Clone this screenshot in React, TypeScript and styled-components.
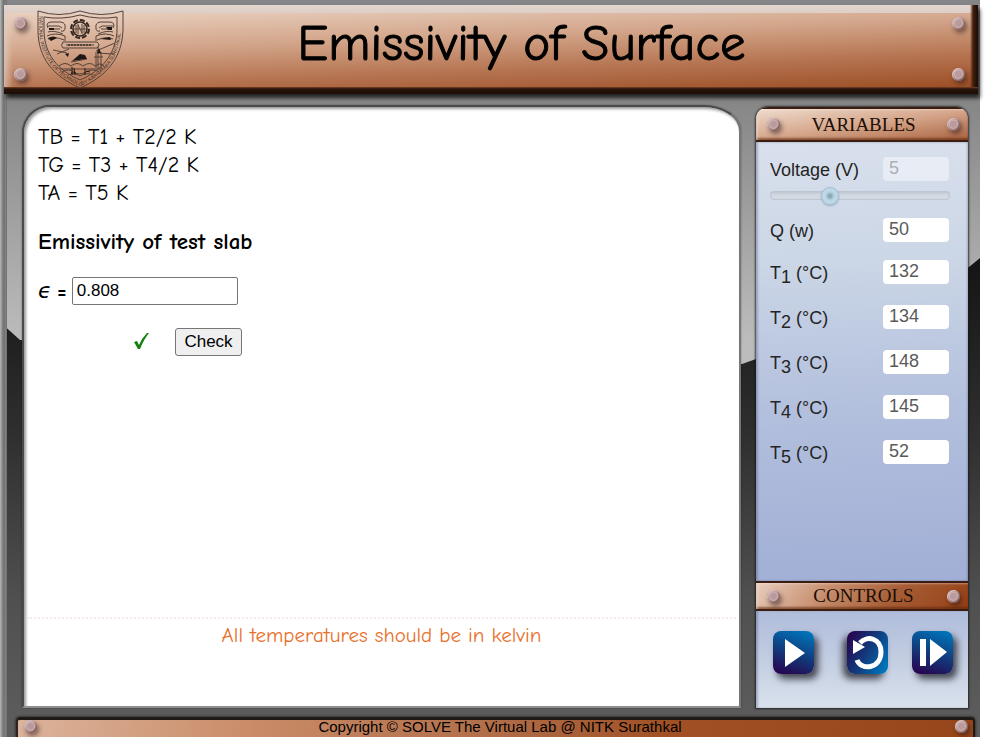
import React from "react";
import styled, { createGlobalStyle, css } from "styled-components";

const COMIC = '"Comic Sans MS", "Comic Neue", "Lato", sans-serif';
const SANS = '"Liberation Sans", Arial, sans-serif';
const SERIF = '"Liberation Serif", "Times New Roman", serif';

const GlobalStyle = createGlobalStyle`
  * { box-sizing: border-box; }
  body { margin: 0; background: #fff; font-family: ${SANS}; color: #000; }
`;

const Frame = styled.div`
  position: relative;
  isolation: isolate;
  display: flex;
  flex-direction: column;
  min-height: 100vh;
  margin-right: 12px;
  padding: 5px 0 0 4px;
  background: linear-gradient(#868688 0, #868686 100px, #bcbcbc 340px);

  &::before {
    content: "";
    position: absolute;
    inset: 0;
    z-index: -1;
    background: linear-gradient(#141414 256px, #303030 440px, #505050 600px, #5c5c5c 720px);
    clip-path: polygon(
      0 322px, 20px 340px, calc(100% - 238px) 364px, calc(100% - 224px) 359px,
      calc(100% - 11px) 267px, 100% 258px, 100% 100%, 0 100%
    );
  }

  &::after {
    content: "";
    position: absolute;
    inset: 0 auto 0 0;
    z-index: -1;
    width: 7px;
    background: linear-gradient(90deg, #b8bab9, #8b8e8d 2px, #6d706f 4px, #858887 6px, #5c5f5e);
  }
`;

const Rivet = styled.span`
  display: block;
  flex: none;
  width: 13px;
  height: 13px;
  border-radius: 50%;
  background: radial-gradient(circle at 50% 48%, #ba9a9a 0 3px, #cbb0b0 4px, #a58080 6px);
  box-shadow: 2px 3px 5px rgba(40, 20, 20, 0.55), inset 1px 1px 1px #dcc6c6, inset -1px -1px 1px #7d5c5c;
`;

const Banner = styled.header`
  display: flex;
  align-items: flex-start;
  height: 89px;
  margin-right: 2px;
  padding: 12px 13px 12px 10px;
  background:
    linear-gradient(#7a4325, #26130a 2px, #1c0d05) 0 100% / 100% 7px no-repeat,
    linear-gradient(90deg, transparent, #45200e 3px, #180a04) 100% 0 / 8px 100% no-repeat,
    linear-gradient(#e2d6cf, #ddcfc7) 0 0 / 100% 8px no-repeat,
    linear-gradient(90deg, rgba(225, 205, 195, 0.7), transparent) 0 0 / 9px 100% no-repeat,
    linear-gradient(178deg, #e8cfbe 10px, #d3a68b 38%, #b57350 68%, #9a4c22 96%);
  box-shadow: 2px 4px 4px rgba(0, 0, 0, 0.75);
`;

const RivetPair = styled.div`
  display: flex;
  flex-direction: column;
  gap: 38px;
`;

const Logo = styled.svg`
  flex: none;
  width: 88px;
  height: 80px;
  margin: -7px 0 0 10px;
`;

const Title = styled.h1`
  flex: 1;
  margin: -3px 0 0;
  padding: 0 70px 0 36px;
  font: 400 51px/60px ${COMIC};
  -webkit-text-stroke: 1px #000;
  text-align: center;
`;

const Workspace = styled.div`
  flex: 1;
  display: flex;
  gap: 15px;
  padding: 11px 12px 9px 18px;
`;

const Sheet = styled.main`
  flex: 1;
  display: flex;
  flex-direction: column;
  padding: 16px 3px 56px;
  border: 2px solid #4a4a4a;
  border-right-color: #777;
  border-bottom-color: #8f8f8f;
  border-radius: 28px 38px 0 0 / 28px 26px 0 0;
  background: #fff;
  box-shadow: inset 2px 2px 3px rgba(0, 0, 0, 0.4), 0 0 2px rgba(0, 0, 0, 0.4);
`;

const Work = styled.div`
  flex: 1;
  padding: 0 11px;
`;

const Formula = styled.p`
  margin: 0;
  font: 400 22px/28px ${COMIC};
`;

const Subject = styled.h2`
  margin: 20px 0;
  font: 700 23px/30px ${COMIC};
`;

const Answer = styled.label`
  display: flex;
  align-items: center;
  gap: 5px;
  font: 700 21px/28px ${COMIC};
`;

const Epsilon = styled.i`
  width: 14px;
  font: italic 400 22px/28px "DejaVu Sans", sans-serif;
`;

const AnswerInput = styled.input`
  width: 166px;
  height: 28px;
  padding: 1px 4px;
  border: 1px solid #767676;
  border-radius: 2px;
  background: #fff;
  font: 17px ${SANS};
`;

const CheckRow = styled.div`
  display: flex;
  align-items: center;
  gap: 26px;
  margin-top: 23px;
  padding-left: 95px;
`;

const Tick = styled.svg`
  width: 16px;
  height: 18px;
  margin-top: -3px;
`;

const CheckButton = styled.button`
  width: 67px;
  height: 28px;
  padding: 0;
  border: 1px solid #767676;
  border-radius: 3px;
  background: #efefef;
  color: #000;
  font: 17px ${SANS};
`;

const Hint = styled.p`
  margin: 0;
  padding-top: 1px;
  border-top: 2px dotted #f5e9ee;
  color: #e8702a;
  font: 400 21px/30px ${COMIC};
  text-align: center;
`;

const SidePanel = styled.aside`
  flex: none;
  display: flex;
  flex-direction: column;
  width: 212px;
  margin-top: 2px;
  overflow: hidden;
  border-radius: 12px 12px 0 0;
  box-shadow: 0 0 2px 1px rgba(20, 20, 20, 0.75);
`;

const Plate = styled.div<{ $deep?: boolean }>`
  display: flex;
  align-items: center;
  justify-content: space-between;
  height: ${(p) => (p.$deep ? 30 : 35)}px;
  padding: 0 8px 0 11px;
  border-top: 2px solid #3a1c10;
  border-bottom: 2px solid #3d1d0e;
  background: ${(p) =>
    p.$deep
      ? "linear-gradient(130deg, #e9cfbf, #c58b6a 35%, #a65c34 65%, #964016)"
      : "linear-gradient(172deg, #eedccd, #d6a78c 50%, #aa6440)"};
  box-shadow: inset 2px 1px 2px rgba(255, 240, 230, 0.4), inset 0 -2px 2px rgba(90, 35, 10, 0.6);
`;

const PlateTitle = styled.h2`
  margin: 0;
  color: #1c0e06;
  font: 400 19px/24px ${SERIF};
`;

const Variables = styled.section`
  flex: 1;
  padding: 15px 19px 0 14px;
  background: linear-gradient(178deg, #d9e0ed, #cbd6e6 27%, #b0bddc 65%, #a2afd6);
  box-shadow: inset 2px 0 2px rgba(60, 70, 110, 0.3), inset -1px 0 2px rgba(60, 70, 110, 0.3);
`;

const Row = styled.label`
  display: flex;
  align-items: flex-start;
  justify-content: space-between;
  height: 45px;
  color: #242424;
  font: 18px/26px ${SANS};

  sub {
    font-size: 18px;
    line-height: 0;
    vertical-align: -4px;
  }
`;

const VoltageRow = styled(Row)`
  height: 32px;
`;

const PowerRow = styled(Row)`
  height: 42px;
`;

const ValueInput = styled.input`
  width: 66px;
  height: 24px;
  padding: 0 6px 2px;
  border: 0;
  border-radius: 4px;
  background: #fff;
  color: #5a5a5a;
  font: 18px ${SANS};

  &:disabled {
    opacity: 0.45;
    color: #777;
  }
`;

const thumb = css`
  box-sizing: border-box;
  width: 18px;
  height: 18px;
  border: 1px solid #a3c0d2;
  border-radius: 50%;
  background: radial-gradient(circle, #8ea8b8 0 2px, #a8c6d8 3px, #bdd8e6 5px);
  box-shadow: 0 1px 2px rgba(60, 90, 120, 0.4);
`;

const Slider = styled.input`
  appearance: none;
  display: block;
  width: 180px;
  height: 20px;
  margin: -4px 0 13px;
  background: transparent;

  &::-webkit-slider-runnable-track {
    height: 9px;
    border-radius: 4px;
    background: linear-gradient(#bac2cc, #d2d8e1 4px, #d6dce5);
    box-shadow: inset 0 0 1px 1px #bdc5d0;
  }

  &::-webkit-slider-thumb {
    appearance: none;
    margin-top: -4px;
    ${thumb}
  }
`;

const Controls = styled.section`
  display: grid;
  grid-template-columns: 74px 65px 41px;
  height: 97px;
  padding: 20px 0 0 17px;
  background: linear-gradient(#afbcdb, #c3cee2 50%, #d9e1ec);
  box-shadow: inset 2px 0 2px rgba(60, 70, 110, 0.3);
`;

const ControlButton = styled.button<{ $mirrored?: boolean }>`
  width: 41px;
  height: 43px;
  padding: 0;
  border: 0;
  border-radius: 8px;
  background: ${(p) =>
    p.$mirrored
      ? "linear-gradient(120deg, #260752 8%, #123b7c 50%, #0072b8 90%)"
      : "linear-gradient(200deg, #0072b8 8%, #123b7c 52%, #260752 92%)"};
  box-shadow: ${(p) => (p.$mirrored ? "-4px" : "4px")} 5px 7px rgba(20, 20, 30, 0.75);

  svg {
    display: block;
    width: 41px;
    height: 43px;
  }
`;

const Footer = styled.footer`
  display: flex;
  align-items: flex-start;
  justify-content: space-between;
  height: 20px;
  margin: 0 5px 0 12px;
  padding: 0 5px 0 6px;
  border-top: 3px solid #1d1a18;
  border-left: 2px solid #2a2522;
  border-right: 2px solid #1d1a18;
  border-radius: 4px 4px 0 0;
  background: linear-gradient(100deg, #dcb49c, #c98b67 25%, #b06d48 50%, #a05024 68%, #96461a);
  box-shadow: 0 0 3px #111;
  font: 15px/14px ${SANS};
`;

const Copyright = styled.span`
  flex: 1;
  padding-left: 8px;
  text-align: center;
`;

const Crest = () => (
  <Logo viewBox="0 0 88 80" role="img" aria-label="NITK crest" fill="none" stroke="#54423a" strokeWidth="1">
    <defs>
      <path id="crest-rim" d="M2 6V20C3 46 17 65 43 76C69 65 83 46 84 20V6" />
    </defs>
    <path d="M1 1Q22 8 43 1Q64 8 86 1V20C85 48 70 66 43 78C16 66 1 48 1 20Z" />
    <path d="M7 7Q25 10 43 5Q62 10 80 7V22C78 44 66 60 43 70C20 60 8 44 7 22Z" />
    <text fontFamily="Liberation Sans, sans-serif" fontSize="5" fill="#3a2b25" stroke="none">
      <textPath href="#crest-rim">NATIONAL INSTITUTE OF TECHNOLOGY KARNATAKA SURATHKAL</textPath>
    </text>
    <circle cx="43" cy="19" r="9" stroke="#33261f" strokeWidth="2" strokeDasharray="5 2" />
    <circle cx="43" cy="19" r="7" stroke="#33261f" strokeWidth="1.6" />
    <path d="M39 15V23M41 14V24M45 14V24M47 15V23M41 15L45 23M37 19H49" />
    <path d="M11 18Q8 12 15 12H24Q29 13 28 18Q28 22 24 21M11 16H22L25 18M12 19H23M11 22Q17 20 26 24M10 26Q18 22 28 26V31M11 29Q18 26 27 30" />
    <path d="M76 18Q79 12 72 12H63Q58 13 59 18Q59 22 63 21M76 16H65L62 18M75 19H64M76 22Q70 20 61 24M77 26Q69 22 59 26V31M76 29Q69 26 60 30" />
    <path d="M11 28Q17 25 20 28L14 31ZM63 29L73 27L74 30ZM12 18H17V20H12ZM69 17H75V20H71Z" fill="#1f1714" stroke="none" />
    <path d="M26 32Q23 36 26 38L60 38Q64 35 60 32ZM29 35H57" />
    <path d="M31 35H55" strokeDasharray="2 1" strokeWidth="2" />
    <path d="M16 40L30 43M20 44L32 39M59 41L78 33M60 43L76 44M61 36V58M59 42V58M64 42V58M57 47H66" />
    <path d="M28 44L32 43L31 47ZM35 51L43 44L48 45L50 49ZM62 38L64 43H60Z" fill="#1f1714" stroke="none" />
    <path d="M34 52L50 49M22 56Q28 51 34 56Q40 51 46 56Q53 51 58 56Q63 52 67 56M22 59H66M25 62Q32 58 37 62T49 62T62 62M31 65Q37 62 43 66Q49 62 56 65" />
    <path d="M35 57V65M37 58L38 65M48 58V65M49 61L53 62M34 63H39" stroke="#1f1714" />
  </Logo>
);

const temperatures = [132, 134, 148, 145, 52];

export default function App() {
  return (
    <>
      <GlobalStyle />
      <Frame>
        <Banner>
          <RivetPair>
            <Rivet />
            <Rivet />
          </RivetPair>
          <Crest />
          <Title>Emissivity of Surface</Title>
          <RivetPair>
            <Rivet />
            <Rivet />
          </RivetPair>
        </Banner>

        <Workspace>
          <Sheet>
            <Work>
              <Formula>TB = T1 + T2/2 K</Formula>
              <Formula>TG = T3 + T4/2 K</Formula>
              <Formula>TA = T5 K</Formula>
              <Subject>Emissivity of test slab</Subject>
              <Answer>
                <Epsilon>ϵ</Epsilon>
                <span>=</span>
                <AnswerInput type="text" defaultValue="0.808" />
              </Answer>
              <CheckRow>
                <Tick viewBox="0 0 16 18" role="img" aria-label="Correct">
                  <path d="M1 10L4 9L6 13Q9 6 14 1H16Q11 7 7 17H5Z" fill="#128012" />
                </Tick>
                <CheckButton type="button">Check</CheckButton>
              </CheckRow>
            </Work>
            <Hint>All temperatures should be in kelvin</Hint>
          </Sheet>

          <SidePanel>
            <Plate>
              <Rivet />
              <PlateTitle>VARIABLES</PlateTitle>
              <Rivet />
            </Plate>
            <Variables>
              <VoltageRow>
                <span>Voltage (V)</span>
                <ValueInput type="text" defaultValue="5" disabled />
              </VoltageRow>
              <Slider type="range" aria-label="Voltage" min={0} max={16} defaultValue={5} disabled />
              <PowerRow>
                <span>Q (w)</span>
                <ValueInput type="text" defaultValue="50" />
              </PowerRow>
              {temperatures.map((value, i) => (
                <Row key={i}>
                  <span>
                    T<sub>{i + 1}</sub> (°C)
                  </span>
                  <ValueInput type="text" defaultValue={value} />
                </Row>
              ))}
            </Variables>
            <Plate $deep>
              <Rivet />
              <PlateTitle>CONTROLS</PlateTitle>
              <Rivet />
            </Plate>
            <Controls>
              <ControlButton type="button" aria-label="Play">
                <svg viewBox="0 0 41 43" fill="#fff">
                  <path d="M12 8L32 22L12 36Z" />
                </svg>
              </ControlButton>
              <ControlButton type="button" aria-label="Reset" $mirrored>
                <svg viewBox="0 0 41 43">
                  <path d="M13 12C20 4 34 7 34 21C34 38 14 40 10 29" fill="none" stroke="#fff" strokeWidth="5" />
                  <path d="M6 9V23L18 16Z" fill="#fff" />
                </svg>
              </ControlButton>
              <ControlButton type="button" aria-label="Step forward">
                <svg viewBox="0 0 41 43" fill="#fff">
                  <path d="M8 8H14V35H8ZM18 8L35 21L18 35Z" />
                </svg>
              </ControlButton>
            </Controls>
          </SidePanel>
        </Workspace>

        <Footer>
          <Rivet />
          <Copyright>Copyright © SOLVE The Virtual Lab @ NITK Surathkal</Copyright>
          <Rivet />
        </Footer>
      </Frame>
    </>
  );
}
